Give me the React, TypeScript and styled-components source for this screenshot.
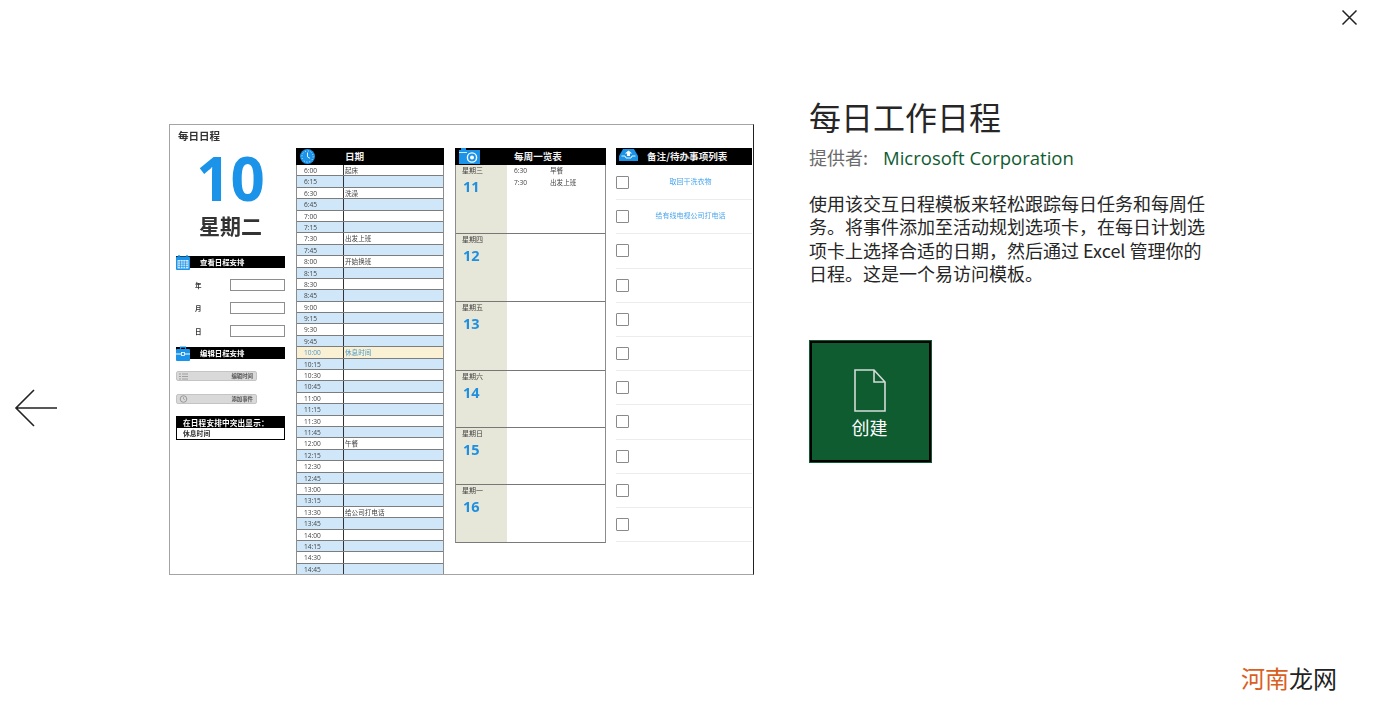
import React from "react";
import styled, { createGlobalStyle } from "styled-components";

const CJK = `"Noto Sans CJK SC", "Noto Sans", sans-serif`;
const BLUE = "#1a93e8";

const GlobalStyle = createGlobalStyle`
  html, body {
    margin: 0;
    padding: 0;
    background: #ffffff;
  }
  * {
    box-sizing: border-box;
  }
`;

const Page = styled.div`
  position: relative;
  display: flex;
  width: 1377px;
  height: 713px;
  overflow: hidden;
  background: #ffffff;
  font-family: ${CJK};
`;

const BackColumn = styled.div`
  width: 169px;
  flex: none;
  padding: 389px 0 0 14px;
`;

const IconButton = styled.button`
  display: block;
  padding: 0;
  border: 0;
  background: none;
  line-height: 0;
`;

const CloseButton = styled(IconButton)`
  position: absolute;
  top: 9px;
  left: 1341px;
`;

const Preview = styled.div`
  display: flex;
  flex: none;
  align-items: flex-start;
  width: 585px;
  height: 451px;
  margin-top: 124px;
  padding: 5px 0 0 6px;
  overflow: hidden;
  border: 1px solid #a4a4a4;
  border-right-color: #222222;
`;

const PreviewBody = styled.div`
  display: flex;
  align-items: flex-start;
  filter: blur(0.3px);
`;

const LeftColumn = styled.div`
  width: 109px;
  flex: none;
  margin-right: 11px;
`;

const SheetTitle = styled.div`
  height: 12px;
  padding-left: 2px;
  font-size: 10.5px;
  line-height: 12px;
  font-weight: 700;
  color: #333333;
`;

const BigDay = styled.div`
  height: 62px;
  margin-top: 5px;
  font-family: "Open Sans", sans-serif;
  font-size: 60px;
  line-height: 62px;
  font-weight: 700;
  text-align: center;
  color: ${BLUE};
`;

const BigWeekday = styled.div`
  height: 24px;
  margin-top: 4px;
  font-size: 21px;
  line-height: 24px;
  font-weight: 700;
  text-align: center;
  color: #333333;
`;

const SideHeader = styled.div<{ $top: number }>`
  display: flex;
  align-items: center;
  height: 12px;
  margin-top: ${(props) => props.$top}px;
  padding-bottom: 2px;
  background: #000000;
  color: #ffffff;
  font-size: 7.4px;
  font-weight: 700;
`;

const SideIcon = styled.div`
  width: 24px;
  height: 15px;
  flex: none;
  line-height: 0;
  margin-top: 2px;
`;

const Field = styled.div`
  display: flex;
  align-items: center;
  justify-content: space-between;
  height: 12px;
  margin-top: 11px;
  padding-left: 19px;
  font-size: 6.5px;
  font-weight: 700;
  color: #333333;
`;

const FieldInput = styled.div`
  width: 55px;
  height: 12px;
  border: 1px solid #8e8e8e;
  background: #ffffff;
`;

const EditButton = styled.div<{ $top: number }>`
  display: flex;
  align-items: center;
  justify-content: space-between;
  width: 81px;
  height: 10px;
  margin-top: ${(props) => props.$top}px;
  padding: 0 3px 0 2px;
  border: 1px solid #c4c4c4;
  border-radius: 2px;
  background: #d9d9d9;
  font-size: 5.4px;
  font-weight: 700;
  color: #555555;
  line-height: 0;
`;

const Legend = styled.div`
  margin-top: 12px;
  border: 1px solid #000000;
`;

const LegendTitle = styled.div`
  height: 11px;
  padding-left: 6px;
  background: #000000;
  color: #ffffff;
  font-size: 7.6px;
  line-height: 11px;
  font-weight: 700;
  letter-spacing: 0.2px;
`;

const LegendValue = styled.div`
  height: 11px;
  padding-left: 6px;
  font-size: 6.8px;
  line-height: 10px;
  font-weight: 700;
  color: #333333;
`;

const TableColumn = styled.div<{ $width: number; $gap: number }>`
  width: ${(props) => props.$width}px;
  flex: none;
  margin-top: 18px;
  margin-right: ${(props) => props.$gap}px;
`;

const TableHeader = styled.div<{ $titleLeft: number }>`
  display: flex;
  align-items: center;
  height: 17px;
  padding: 0 0 2px ${(props) => props.$titleLeft}px;
  background: #000000;
  color: #f2f2f2;
  font-size: 9.6px;
  font-weight: 700;
  position: relative;
`;

const HeaderIcon = styled.div<{ $left: number }>`
  position: absolute;
  top: 0;
  left: ${(props) => props.$left}px;
  line-height: 0;
`;

const ScheduleBody = styled.div`
  border-left: 1px solid #8c8c8c;
  border-right: 1px solid #8c8c8c;
`;

const ScheduleRow = styled.div<{ $tone: "plain" | "shade" | "break" }>`
  display: flex;
  height: 11.4px;
  border-bottom: 1px solid #7d7d7d;
  background: ${(props) =>
    props.$tone === "break"
      ? "#faf0d3"
      : props.$tone === "shade"
        ? "#cfe7f9"
        : "#ffffff"};
  color: ${(props) => (props.$tone === "break" ? "#4b9bd0" : "#444444")};
  font-size: 6.6px;
  line-height: 11.5px;
`;

const TimeCell = styled.div`
  width: 47px;
  flex: none;
  padding-left: 7px;
  border-right: 1px solid #333333;
  font-family: "Open Sans", sans-serif;
`;

const NoteCell = styled.div`
  padding-left: 1px;
  white-space: nowrap;
`;

const WeekBody = styled.div`
  border-left: 1px solid #8c8c8c;
  border-right: 1px solid #8c8c8c;
  border-bottom: 1px solid #7a7a7a;
`;

const DayRow = styled.div<{ $height: number }>`
  display: flex;
  height: ${(props) => props.$height}px;
  border-bottom: 1px solid #777777;
  &:last-child {
    border-bottom: 0;
  }
`;

const DaySide = styled.div`
  width: 51px;
  flex: none;
  padding: 0 0 0 6px;
  background: #e6e7d8;
`;

const DayName = styled.div`
  height: 11px;
  font-size: 7px;
  line-height: 11px;
  color: #444444;
`;

const DayNumber = styled.div`
  font-family: "Open Sans", sans-serif;
  margin-top: 2px;
  padding-left: 1px;
  font-size: 14.5px;
  line-height: 18px;
  font-weight: 700;
  color: #1f8fe0;
`;

const DayEvents = styled.div`
  flex: 1;
  padding-left: 7px;
`;

const DayEvent = styled.div`
  display: flex;
  height: 11.6px;
  font-size: 6.6px;
  line-height: 11.5px;
  color: #444444;
`;

const EventTime = styled.div`
  width: 36px;
  font-family: "Open Sans", sans-serif;
`;

const NoteList = styled.div`
  padding-top: 1px;
`;

const NoteRow = styled.div`
  display: flex;
  align-items: center;
  height: 34.2px;
  border-bottom: 1.5px solid #ececec;
`;

const NoteCheck = styled.div`
  width: 13px;
  height: 13px;
  flex: none;
  border: 1.5px solid #8a8a8a;
  border-radius: 1px;
`;

const NoteText = styled.div`
  flex: 1;
  padding-bottom: 4px;
  font-size: 7px;
  text-align: center;
  color: #4ba6ec;
`;

const Details = styled.div`
  width: 400px;
  flex: none;
  margin-left: 55px;
  padding-top: 95px;
`;

const Title = styled.h1`
  margin: 0;
  font-size: 32px;
  line-height: 42px;
  font-weight: 400;
  color: #262626;
`;

const Provider = styled.div`
  display: flex;
  align-items: center;
  height: 24px;
  margin-top: 8px;
  font-size: 18px;
  color: #6b6b6b;
`;

const ProviderName = styled.span`
  margin-left: 15px;
  font-family: "Open Sans", sans-serif;
  font-size: 18.5px;
  color: #0f5c30;
`;

const Description = styled.p`
  width: 400px;
  margin: 23px 0 0;
  font-size: 18px;
  line-height: 23.3px;
  color: #262626;
`;

const CreateButton = styled.button`
  display: flex;
  flex-direction: column;
  align-items: center;
  width: 123px;
  height: 123px;
  margin-top: 55px;
  padding: 26px 2px 0 0;
  border: 3px solid #000000;
  outline: 1px solid #0f5c30;
  outline-offset: -1px;
  background: #0f5c30;
  color: #ffffff;
  font-family: ${CJK};
  font-size: 18px;
  line-height: 24px;
`;

const CreateLabel = styled.span`
  margin-top: 3px;
`;

const Watermark = styled.div`
  position: absolute;
  top: 663px;
  left: 1241px;
  font-size: 24px;
  line-height: 30px;
  color: #222222;
`;

const WatermarkAccent = styled.span`
  color: #d9601f;
`;

const CalendarIcon = () => (
  <svg width="14" height="15" viewBox="0 0 14 15">
    <rect x="0" y="1.5" width="14" height="13.5" rx="1" fill={BLUE} />
    <rect x="1.5" y="5" width="11" height="8.5" fill="#cfe7f9" />
    <path d="M3 0v3M11 0v3" stroke={BLUE} strokeWidth="1.4" />
    <path d="M2 7h10M2 9.2h10M2 11.4h10M4.5 5.5v8M7 5.5v8M9.5 5.5v8" stroke={BLUE} strokeWidth="0.7" />
  </svg>
);

const ToolboxIcon = () => (
  <svg width="14" height="15" viewBox="0 0 14 15">
    <path d="M4.5 3V1.2h5V3" fill="none" stroke={BLUE} strokeWidth="1.2" />
    <rect x="0" y="3" width="14" height="12" rx="1" fill={BLUE} />
    <path d="M0 8h14" stroke="#ffffff" strokeWidth="1" />
    <rect x="5.5" y="6.5" width="3" height="3" fill={BLUE} stroke="#ffffff" strokeWidth="0.8" />
  </svg>
);

const ClockIcon = () => (
  <svg width="17" height="17" viewBox="0 0 17 17">
    <circle cx="8.5" cy="8.5" r="7.5" fill={BLUE} />
    <circle cx="8.5" cy="8.5" r="5.6" fill="none" stroke="#ffffff" strokeWidth="0.9" strokeDasharray="0.9 2" />
    <path d="M8.5 4.5v4.3l2.6 1.6" fill="none" stroke="#ffffff" strokeWidth="0.9" />
  </svg>
);

const CameraIcon = () => (
  <svg width="22" height="17" viewBox="0 0 22 17">
    <rect x="0" y="2" width="21" height="14" fill={BLUE} />
    <rect x="2" y="0" width="5" height="2.5" fill={BLUE} />
    <path d="M0 4.5h8" stroke="#ffffff" strokeWidth="0.8" />
    <circle cx="13" cy="9.5" r="4.6" fill="none" stroke="#ffffff" strokeWidth="1.4" />
    <circle cx="13" cy="9.5" r="2" fill="#ffffff" />
  </svg>
);

const InboxIcon = () => (
  <svg width="19" height="17" viewBox="0 0 19 17">
    <path d="M4 1h11l4 7v5H0V8z" fill={BLUE} />
    <path d="M9.5 2.5l3.6 3H11v2.5H8V5.5H5.9z" fill="#ffffff" />
    <path d="M2.5 8h3.5l1 2h5l1-2h3.5" fill="none" stroke="#ffffff" strokeWidth="0.9" />
  </svg>
);

const ListGlyph = () => (
  <svg width="9" height="7" viewBox="0 0 9 7">
    <path d="M0 1h2M3 1h6M0 3.5h2M3 3.5h6M0 6h2M3 6h6" stroke="#a0a0a0" strokeWidth="1" />
  </svg>
);

const ClockGlyph = () => (
  <svg width="9" height="8" viewBox="0 0 9 8">
    <circle cx="4.5" cy="4" r="3.3" fill="none" stroke="#8a8a8a" strokeWidth="0.8" />
    <path d="M4.5 2v2l1.3 0.7" fill="none" stroke="#8a8a8a" strokeWidth="0.6" />
  </svg>
);

const BackArrow = () => (
  <svg width="44" height="38" viewBox="0 0 44 38">
    <path d="M43 19H2M20 1 2 19l18 18" fill="none" stroke="#222222" strokeWidth="1.6" />
  </svg>
);

const CloseIcon = () => (
  <svg width="17" height="17" viewBox="0 0 17 17">
    <path d="M1.5 1.5l14 14M15.5 1.5l-14 14" fill="none" stroke="#222222" strokeWidth="1.5" />
  </svg>
);

const DocumentIcon = () => (
  <svg width="32" height="43" viewBox="0 0 32 43">
    <path d="M1 1h19l11 12v29H1zM20 1v12h11" fill="none" stroke="#d3dbd6" strokeWidth="1.6" />
  </svg>
);

const scheduleNotes: { [key: string]: string } = {
  "6:00": "起床",
  "6:30": "洗澡",
  "7:30": "出发上班",
  "8:00": "开始换班",
  "10:00": "休息时间",
  "12:00": "午餐",
  "13:30": "给公司打电话",
};

const scheduleTimes: string[] = [];
for (let hour = 6; hour <= 14; hour++) {
  ["00", "15", "30", "45"].forEach((minute) => {
    scheduleTimes.push(`${hour}:${minute}`);
  });
}

const days = [
  { name: "星期三", day: 11, height: 68.5, events: [["6:30", "早餐"], ["7:30", "出发上班"]] },
  { name: "星期四", day: 12, height: 68.5, events: [] },
  { name: "星期五", day: 13, height: 68.5, events: [] },
  { name: "星期六", day: 14, height: 57, events: [] },
  { name: "星期日", day: 15, height: 57, events: [] },
  { name: "星期一", day: 16, height: 57, events: [] },
];

const todos = ["取回干洗衣物", "给有线电视公司打电话", "", "", "", "", "", "", "", "", ""];

const rowTone = (time: string, index: number): "plain" | "shade" | "break" => {
  if (time === "10:00") {
    return "break";
  }
  return index % 2 === 1 ? "shade" : "plain";
};

const App: React.FC = () => {
  return (
    <Page>
      <GlobalStyle />
      <BackColumn>
        <IconButton aria-label="返回">
          <BackArrow />
        </IconButton>
      </BackColumn>

      <Preview>
        <PreviewBody>
          <LeftColumn>
            <SheetTitle>每日日程</SheetTitle>
            <BigDay>10</BigDay>
            <BigWeekday>星期二</BigWeekday>
            <SideHeader $top={19}>
              <SideIcon>
                <CalendarIcon />
              </SideIcon>
              查看日程安排
            </SideHeader>
            {["年", "月", "日"].map((label) => (
              <Field key={label}>
                {label}
                <FieldInput />
              </Field>
            ))}
            <SideHeader $top={10}>
              <SideIcon>
                <ToolboxIcon />
              </SideIcon>
              编辑日程安排
            </SideHeader>
            <EditButton $top={12}>
              <ListGlyph />
              编辑时间
            </EditButton>
            <EditButton $top={13}>
              <ClockGlyph />
              添加事件
            </EditButton>
            <Legend>
              <LegendTitle>在日程安排中突出显示：</LegendTitle>
              <LegendValue>休息时间</LegendValue>
            </Legend>
          </LeftColumn>

          <TableColumn $width={148} $gap={11}>
            <TableHeader $titleLeft={49}>
              <HeaderIcon $left={3}>
                <ClockIcon />
              </HeaderIcon>
              日期
            </TableHeader>
            <ScheduleBody>
              {scheduleTimes.map((time, index) => (
                <ScheduleRow key={time} $tone={rowTone(time, index)}>
                  <TimeCell>{time}</TimeCell>
                  <NoteCell>{scheduleNotes[time]}</NoteCell>
                </ScheduleRow>
              ))}
            </ScheduleBody>
          </TableColumn>

          <TableColumn $width={151} $gap={10}>
            <TableHeader $titleLeft={59}>
              <HeaderIcon $left={4}>
                <CameraIcon />
              </HeaderIcon>
              每周一览表
            </TableHeader>
            <WeekBody>
              {days.map((item) => (
                <DayRow key={item.name} $height={item.height}>
                  <DaySide>
                    <DayName>{item.name}</DayName>
                    <DayNumber>{item.day}</DayNumber>
                  </DaySide>
                  <DayEvents>
                    {item.events.map(([time, label]) => (
                      <DayEvent key={time}>
                        <EventTime>{time}</EventTime>
                        {label}
                      </DayEvent>
                    ))}
                  </DayEvents>
                </DayRow>
              ))}
            </WeekBody>
          </TableColumn>

          <TableColumn $width={136} $gap={0}>
            <TableHeader $titleLeft={31}>
              <HeaderIcon $left={3}>
                <InboxIcon />
              </HeaderIcon>
              备注/待办事项列表
            </TableHeader>
            <NoteList>
              {todos.map((todo, index) => (
                <NoteRow key={index}>
                  <NoteCheck />
                  <NoteText>{todo}</NoteText>
                </NoteRow>
              ))}
            </NoteList>
          </TableColumn>
        </PreviewBody>
      </Preview>

      <Details>
        <Title>每日工作日程</Title>
        <Provider>
          提供者:
          <ProviderName>Microsoft Corporation</ProviderName>
        </Provider>
        <Description>
          使用该交互日程模板来轻松跟踪每日任务和每周任务。将事件添加至活动规划选项卡，在每日计划选项卡上选择合适的日期，然后通过 Excel 管理你的日程。这是一个易访问模板。
        </Description>
        <CreateButton>
          <DocumentIcon />
          <CreateLabel>创建</CreateLabel>
        </CreateButton>
      </Details>

      <CloseButton aria-label="关闭">
        <CloseIcon />
      </CloseButton>

      <Watermark>
        <WatermarkAccent>河南</WatermarkAccent>龙网
      </Watermark>
    </Page>
  );
};

export default App;
